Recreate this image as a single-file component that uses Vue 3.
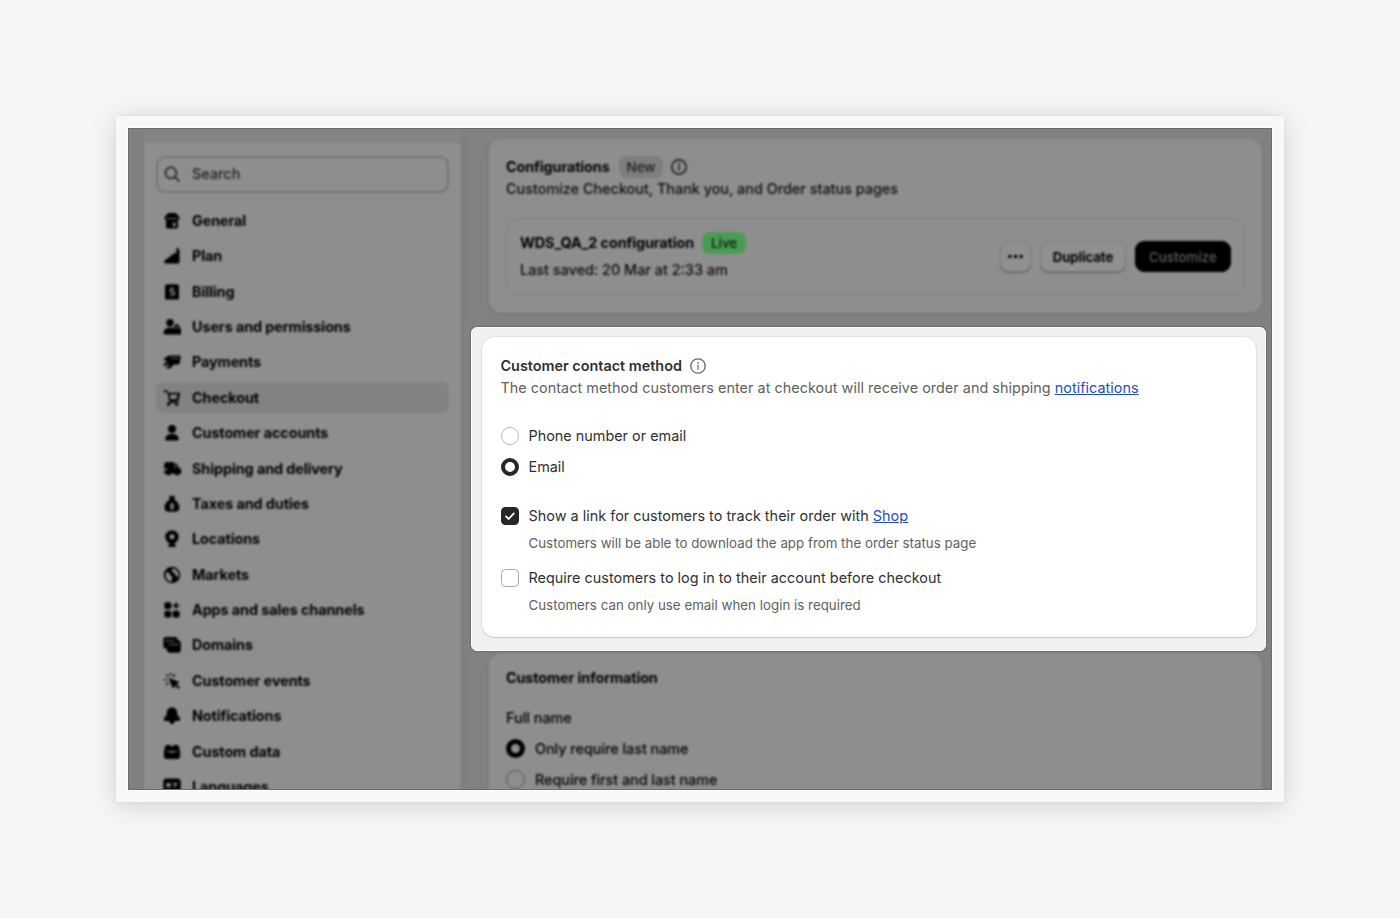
<template>
  <div class="page">
    <div class="frame">
      <div class="screen">
        <div class="backdrop">
          <aside class="sidebar">
            <div class="search">
              <svg class="icon" viewBox="0 0 20 20">
                <circle cx="9" cy="9" r="5" fill="none" stroke="currentColor" stroke-width="1.5" />
                <path d="M12.8 12.8l3.5 3.5" stroke="currentColor" stroke-width="1.6" stroke-linecap="round" />
              </svg>
              <span>Search</span>
            </div>
            <nav class="nav">
              <a
                v-for="item in navItems"
                :key="item.name"
                class="nav-item"
                :class="{ active: item.name === activeItem }"
                @click="activeItem = item.name"
              >
                <svg class="icon" viewBox="0 0 20 20">
                  <path :d="item.icon" fill="currentColor" fill-rule="evenodd" />
                </svg>
                <span>{{ item.name }}</span>
              </a>
            </nav>
          </aside>

          <main class="content">
            <section class="card configurations">
              <div class="heading">
                <h2 class="config-title">Configurations</h2>
                <span class="badge badge-new">New</span>
                <svg class="info" viewBox="0 0 18 18">
                  <circle cx="9" cy="9" r="7.2" fill="none" stroke="currentColor" stroke-width="1.5" />
                  <path d="M9 8.3v4" stroke="currentColor" stroke-width="1.4" stroke-linecap="round" />
                  <circle cx="9" cy="5.7" r="1" fill="currentColor" />
                </svg>
              </div>
              <p class="config-desc">Customize Checkout, Thank you, and Order status pages</p>
              <div class="config-box">
                <div class="config-info">
                  <div class="heading">
                    <h3 class="config-name">WDS_QA_2 configuration</h3>
                    <span class="badge badge-live">Live</span>
                  </div>
                  <p class="saved">Last saved: 20 Mar at 2:33 am</p>
                </div>
                <div class="actions">
                  <button class="btn btn-more">
                    <svg viewBox="0 0 20 20">
                      <circle cx="4" cy="10" r="1.9" />
                      <circle cx="10" cy="10" r="1.9" />
                      <circle cx="16" cy="10" r="1.9" />
                    </svg>
                  </button>
                  <button class="btn btn-duplicate">Duplicate</button>
                  <button class="btn btn-primary">Customize</button>
                </div>
              </div>
            </section>

            <section class="card customer-info">
              <h2 class="customer-title">Customer information</h2>
              <h3 class="full-name">Full name</h3>
              <div class="option">
                <span class="radio checked"></span>
                <span>Only require last name</span>
              </div>
              <div class="option">
                <span class="radio"></span>
                <span>Require first and last name</span>
              </div>
            </section>
          </main>
        </div>

        <!-- 강조 영역 -->
        <div class="spotlight">
          <section class="contact-card">
            <div class="heading">
              <h2 class="contact-title">Customer contact method</h2>
              <svg class="info" viewBox="0 0 18 18">
                <circle cx="9" cy="9" r="7.2" fill="none" stroke="currentColor" stroke-width="1.3" />
                <path d="M9 8.2v4.1" stroke="currentColor" stroke-width="1.2" stroke-linecap="round" />
                <circle cx="9" cy="5.8" r="0.85" fill="currentColor" />
              </svg>
            </div>
            <p class="contact-desc">
              The contact method customers enter at checkout will receive order and shipping <a href="#">notifications</a>
            </p>

            <div class="radio-group">
              <div
                v-for="method in contactMethods"
                :key="method"
                class="option"
                @click="selectedMethod = method"
              >
                <span class="radio" :class="{ checked: selectedMethod === method }"></span>
                <span>{{ method }}</span>
              </div>
            </div>

            <div class="check-group">
              <div class="check-row">
                <span class="checkbox checked">
                  <svg viewBox="0 0 18 18">
                    <path d="M5 9.4l2.7 2.6 5.1-5.6" fill="none" stroke="#fff" stroke-width="1.8" stroke-linecap="round" stroke-linejoin="round" />
                  </svg>
                </span>
                <div>
                  <p class="check-label">Show a link for customers to track their order with <a href="#">Shop</a></p>
                  <p class="check-help">Customers will be able to download the app from the order status page</p>
                </div>
              </div>
              <div class="check-row">
                <span class="checkbox"></span>
                <div>
                  <p class="check-label">Require customers to log in to their account before checkout</p>
                  <p class="check-help">Customers can only use email when login is required</p>
                </div>
              </div>
            </div>
          </section>
        </div>
      </div>
    </div>
  </div>
</template>

<script setup>
import { ref } from 'vue'

const navItems = [
  {
    name: 'General',
    icon: 'M6 2h8l3.6 4.5c0 1.6-.8 2.5-1.6 2.7V16c0 .9-.6 1.5-1.5 1.5h-9C4.600 17.500 4 16.900 4 16V9.200c-.9-.3-1.600-1.100-1.600-2.700zM11 11.500v4h2.500v-4zM4.600 7v.8h10.800V7z'
  },
  {
    name: 'Plan',
    icon: 'M14.5 1.5c1.300.5 3 1.500 3 3v10.700c0 1.500-.9 2.400-2.400 2.400H4.500c-2.600 0-3.200-2.500-1-3.800l3.300-2V10.500h2.500V8.500h2.500V7h2.700z'
  },
  {
    name: 'Billing',
    icon: 'M5 2.2h10c1.200 0 2 .8 2 2v13.400H3V4.200c0-1.200.8-2 2-2zM8 6v4.500h3.500v1.700H8v1.300h4.800V9.200H9.500V7.300h3V6z'
  },
  {
    name: 'Users and permissions',
    icon: 'M8 2a3.700 3.700 0 110 7.400A3.700 3.700 0 018 2zM1.500 16.300c0-3.600 2.700-5.800 6.500-5.800 1.300 0 2.400.3 3.200.8l.8-.8V10a2.800 2.800 0 015.600 0v1l1.400 1v5.500H2.700c-.7 0-1.200-.5-1.200-1.200zM13.700 9.800v1.400h2.200V9.800z'
  },
  {
    name: 'Payments',
    icon: 'M7.5 3.500h9.800c1.100 0 1.700.8 1.500 1.800L17.700 11c-.2 1-.9 1.600-1.900 1.600H12l-4 4H3.500l3.700-3.700-2-.5-3 2.300c-.9-1.600-.2-3.100 1.400-4.200L6 8.700H3L1.600 6.800c2.300-.3 3.200-3.300 5.900-3.300zM8.500 6.500h8.300v-.8H8.500z'
  },
  {
    name: 'Checkout',
    icon: 'M1.700 2.200h2.500c1 0 1.800.7 1.900 1.600l.1.900h12l-1.400 6.700c-.2 1-1 1.600-2 1.600H7.200L5.600 5.200 4.300 4H1.700zM7.800 6.500l.7 4.700h6l1-4.700zM6 13.300h10.500V15H6zM6.700 14.300a1.800 1.800 0 110 3.600 1.800 1.800 0 010-3.600zM14.700 14.300a1.800 1.800 0 110 3.600 1.800 1.800 0 010-3.600z'
  },
  {
    name: 'Customer accounts',
    icon: 'M10 1.900a4 4 0 110 8 4 4 0 010-8zM3.200 16.200c0-3.400 3-5.300 6.800-5.300s6.800 1.900 6.800 5.300c0 .8-.5 1.300-1.200 1.300H4.400c-.7 0-1.200-.5-1.200-1.300z'
  },
  {
    name: 'Shipping and delivery',
    icon: 'M5 3h5.500c1.200 0 2 .8 2 1.800h1.300c.7 0 1.300.4 1.600 1l1.300 2.900 1.500.9c.7.4 1 1 1 1.800v3.400H17.500a2.500 2.500 0 01-4.800 0H9a2.500 2.500 0 01-4.800 0H2.200v-3.600h3V9.700h-3V6C2.200 4.200 3.300 3 5 3zM12.500 6.500v2h2l-1-2z'
  },
  {
    name: 'Taxes and duties',
    icon: 'M7 1.500l3 .8 3-.8-.8 3.900c2.900 1.700 5.300 5 5.300 8.100 0 2.700-1.800 4.300-4.400 4.300H6.900c-2.600 0-4.400-1.600-4.400-4.300 0-3.100 2.400-6.400 5.300-8.100zM9.400 8.800v1c-2.100.6-1.900 2.800.3 3.100 1.100.2 1.100.8.2.9-.6 0-1-.3-1.400-.7l-1 1c.5.5 1.100.8 1.900.9v.8h1.300V15c2.100-.6 1.900-3-.3-3.400-1.200-.2-1.100-.8-.3-.8.5 0 .8.2 1.200.6l1-1c-.5-.5-1-.7-1.700-.8v-.8z'
  },
  {
    name: 'Locations',
    icon: 'M10 1.500c4 0 6.700 2.700 6.700 6.200 0 3-1.900 5-3.600 6.400L12.200 16h1.500v2H6.300v-2h1.500l-.9-1.900C5.200 12.700 3.300 10.700 3.300 7.700 3.300 4.200 6 1.500 10 1.500zM10 5.200a2.500 2.500 0 100 5 2.500 2.500 0 000-5z'
  },
  {
    name: 'Markets',
    icon: 'M10 1.800a8.200 8.200 0 110 16.400 8.200 8.200 0 010-16.400zM5.500 6.500l5 6-1 1.500.6 2.500C6.300 16.500 3.700 13.800 3.700 10.500c0-1.500.7-3 1.800-4zM10.500 3.500l-.8 2.700 2.500 1.500 2.300 3.800 1.800.5c1-3.700-1.200-8-5.800-8.500z'
  },
  {
    name: 'Apps and sales channels',
    icon: 'M4.200 2.200h3.300c1.100 0 1.800.7 1.800 1.800v3.300c0 1.100-.7 1.800-1.800 1.800H4.200c-1.100 0-1.800-.7-1.800-1.800V4c0-1.100.7-1.800 1.800-1.800zM13.200 2.400h1.800v2.300h2.300v1.800H15v2.300h-1.800V6.500h-2.300V4.700h2.300zM4.200 10.700h3.300c1.100 0 1.800.7 1.800 1.800v3.300c0 1.100-.7 1.800-1.800 1.800H4.200c-1.100 0-1.800-.7-1.800-1.800v-3.300c0-1.100.7-1.800 1.800-1.800zM12.500 10.700h3.300c1.100 0 1.800.7 1.800 1.800v3.300c0 1.100-.7 1.800-1.800 1.800h-3.300c-1.100 0-1.800-.7-1.800-1.800v-3.300c0-1.100.7-1.800 1.800-1.800z'
  },
  {
    name: 'Domains',
    icon: 'M4 2h9.200c1.400 0 2.300 1 2.300 2.300v1h.7c1.600 0 2.600 1 2.600 2.600v7.200c0 1.600-1 2.600-2.600 2.600H7.500c-1.600 0-2.600-1-2.600-2.600v-1.500H4c-1.600 0-2.700-1-2.700-2.600V4.600C1.300 3 2.400 2 4 2zM3.300 5.500v.8h9v-.8zM7 9v.8h9.500V9z'
  },
  {
    name: 'Customer events',
    icon: 'M8 1.800h1.300v3H8zM3.700 3.900l1-1 2.200 2.200-1 1zM12.500 2.900l1 1-2.100 2.200-1-1zM2 8h3v1.300H2zM3.700 13.400l2.200-2.200 1 1-2.200 2.200zM7.900 7.200l8.600 3.200c.9.400.9 1.400 0 1.700l-2 .8 3.600 3.600-1.500 1.500-3.600-3.600-.8 2c-.4.900-1.500.9-1.800 0L7 8.200c-.2-.7.200-1.200.9-1z'
  },
  {
    name: 'Notifications',
    icon: 'M10 1.600c3.300 0 5.100 2.300 5.300 5.400l.2 2.300 2 2.200c1.400 1.700.6 3.500-1.400 3.500h-3.400C12.500 17 11.500 18.200 10 18.200S7.500 17 7.300 15H3.900c-2 0-2.800-1.800-1.400-3.500l2-2.200.2-2.300c.2-3.100 2-5.400 5.300-5.400z'
  },
  {
    name: 'Custom data',
    icon: 'M5 3h2.600c1 0 1.600.7 1.600 1.700h1.600C10.800 3.700 11.400 3 12.400 3H15c1.100 0 1.700.7 1.900 1.700l1.200 5.100v4.500c0 1.600-1.100 2.700-2.700 2.700H4.600c-1.600 0-2.700-1.100-2.700-2.700V9.800l1.200-5.100C3.300 3.700 3.900 3 5 3zM5 9v.8h2.500l1 .8h3l1-.8H15V9z'
  },
  {
    name: 'Languages',
    icon: 'M4.500 1.500h11c2 0 3.200 1.200 3.200 3.200v10.600c0 2-1.200 3.200-3.200 3.200h-11c-2 0-3.200-1.200-3.200-3.200V4.700c0-2 1.200-3.200 3.200-3.200zM4.500 6v5h1.300V9h1.500v2h1.300V6zM10.800 6v1.300h1.700V11h1.300V7.300h1.700V6z'
  }
]

const contactMethods = ['Phone number or email', 'Email']

const activeItem = ref('Checkout')
const selectedMethod = ref('Email')
</script>

<style>
body {
  margin: 0;
  background: #f6f6f6;
}
</style>

<style scoped>
* {
  box-sizing: border-box;
}

.page {
  width: 1400px;
  height: 918px;
  padding: 116px;
  overflow: hidden;
  background: #f6f6f6;
  font-family: Inter, "Liberation Sans", sans-serif;
  font-size: 14.4px;
  line-height: 22px;
}

.frame {
  width: 1168px;
  height: 686px;
  padding: 12px;
  background: #f8f8f6;
  box-shadow: 0 3px 24px rgba(0, 0, 0, 0.16), 0 0 1px rgba(0, 0, 0, 0.15);
}

.screen {
  position: relative;
  width: 1144px;
  height: 662px;
  overflow: hidden;
  background: #818181;
  box-shadow: 0 0 0 1px #fff;
}

.screen::after {
  content: '';
  position: absolute;
  inset: 0;
  border: 1px solid #6c6c6c;
}

h2,
h3,
p {
  margin: 0;
  font-size: inherit;
  font-weight: 400;
  white-space: nowrap;
}

.backdrop {
  display: flex;
  gap: 28px;
  height: 700px;
  padding-left: 16px;
  color: #000;
  filter: blur(1.15px);
}

.sidebar {
  width: 317px;
  padding: 13px 12px 0;
  border-top: 15px solid #848484;
  background: #8e8e8e;
  box-shadow: 0 0 3px #747474;
}

.search {
  display: flex;
  align-items: center;
  gap: 9px;
  height: 37px;
  padding: 0 0 1px 3px;
  border: 2px solid #757575;
  border-radius: 9px;
  color: #222;
  font-weight: 500;
}

.icon {
  flex: none;
  width: 22px;
  height: 22px;
}

.nav {
  display: flex;
  flex-direction: column;
  gap: 4.4px;
  margin-top: 12.300px;
}

.nav-item {
  display: flex;
  align-items: center;
  gap: 9px;
  height: 31px;
  padding-left: 5px;
  border-radius: 8px;
  font-weight: 650;
  letter-spacing: -0.1px;
  white-space: nowrap;
  cursor: pointer;
}

.nav-item.active {
  background: #828282;
}

.nav .icon {
  width: 20px;
  height: 20px;
  margin: 0 1px;
}

.content {
  width: 773px;
  padding-top: 11px;
}

.card {
  padding: 17px;
  border-radius: 13px;
  background: #8e8e8e;
  box-shadow: 0 1px 2px #6d6d6d;
}

.configurations {
  height: 174px;
}

.heading {
  display: flex;
  align-items: center;
}

.config-title,
.config-name,
.customer-title {
  font-weight: 700;
  letter-spacing: -0.12px;
}

.badge {
  height: 22px;
  padding: 0 8px;
  border-radius: 8px;
  font-size: 13.3px;
  font-weight: 550;
}

.badge-new {
  margin-left: 9px;
  background: #7e7e7e;
  color: #1a1a1a;
}

.badge-live {
  margin-left: 8px;
  padding: 0 9px;
  background: #4c9b55;
  color: #00220b;
}

.info {
  width: 18px;
  height: 18px;
  margin-left: 7px;
  color: #111;
}

.config-desc,
.saved {
  color: #0c0c0c;
  font-weight: 450;
}

.config-box {
  display: flex;
  align-items: center;
  justify-content: space-between;
  height: 77px;
  margin-top: 18px;
  padding: 0 13px;
  border: 1px solid #808080;
  border-radius: 12px;
}

.saved {
  margin-top: 5px;
}

.actions {
  display: flex;
  gap: 9px;
}

.btn {
  height: 31px;
  padding: 0;
  border: 1px solid #808080;
  border-radius: 9px;
  background: #909090;
  box-shadow: 0 1px 1px #5c5c5c;
  color: #000;
  font-family: inherit;
  font-size: 13.200px;
  font-weight: 700;
  letter-spacing: -0.1px;
}

.btn-more {
  display: flex;
  align-items: center;
  justify-content: center;
  width: 31px;
}

.btn-more svg {
  flex: none;
  width: 19px;
  height: 19px;
}

.btn-duplicate {
  width: 86px;
}

.btn-primary {
  width: 96px;
  border-color: #000;
  background: #000;
  box-shadow: none;
  color: #606060;
  font-weight: 550;
  letter-spacing: 0.1px;
}

.customer-info {
  height: 180px;
  margin-top: 340px;
  padding-top: 14px;
}

.full-name {
  margin-top: 18px;
  font-weight: 550;
}

.option {
  display: flex;
  align-items: center;
  gap: 10px;
  height: 31px;
}

.radio {
  flex: none;
  width: 18px;
  height: 18px;
  border: 1px solid #bababa;
  border-radius: 50%;
}

.radio.checked {
  border: 4.500px solid #262626;
}

.customer-info .option {
  font-weight: 500;
  letter-spacing: -0.04px;
}

.full-name + .option {
  margin-top: 4px;
}

.customer-info .radio {
  width: 19px;
  height: 19px;
  border-color: #555;
}

.customer-info .radio.checked {
  border: 5.500px solid #000;
}

.spotlight {
  position: absolute;
  z-index: 1;
  top: 199px;
  left: 343px;
  width: 795px;
  height: 324px;
  padding: 9px 9px 0 10px;
  border: 1px solid #fff;
  border-radius: 6px;
  background: #f0f0f0;
  box-shadow: 0 0 1px 1px rgba(0, 0, 0, 0.15);
}

.contact-card {
  height: 300px;
  padding: 18px 18.500px;
  border-radius: 13px;
  background: #fff;
  box-shadow: 0 0 1px 1px rgba(0, 0, 0, 0.05), 0 1px 1px rgba(0, 0, 0, 0.12);
  color: #303030;
}

.contact-title {
  font-weight: 600;
}

.contact-card .info {
  color: #666;
}

.contact-desc {
  color: #616161;
  letter-spacing: 0.03px;
}

a[href] {
  color: #1f4fb8;
  text-decoration: underline;
}

.radio-group {
  margin-top: 21px;
}

.check-group {
  display: flex;
  flex-direction: column;
  gap: 13px;
  margin-top: 23px;
}

.check-row {
  display: flex;
  gap: 10px;
}

.checkbox {
  flex: none;
  width: 18px;
  height: 18px;
  margin-top: 2px;
  border: 1px solid #a8a8a8;
  border-radius: 4.500px;
}

.checkbox.checked {
  border: none;
  background: #262626;
}

.checkbox svg {
  display: block;
}

.check-label {
  letter-spacing: 0.02px;
}

.check-help {
  margin-top: 5px;
  color: #616161;
  font-size: 13.3px;
  letter-spacing: 0.02px;
}
</style>
